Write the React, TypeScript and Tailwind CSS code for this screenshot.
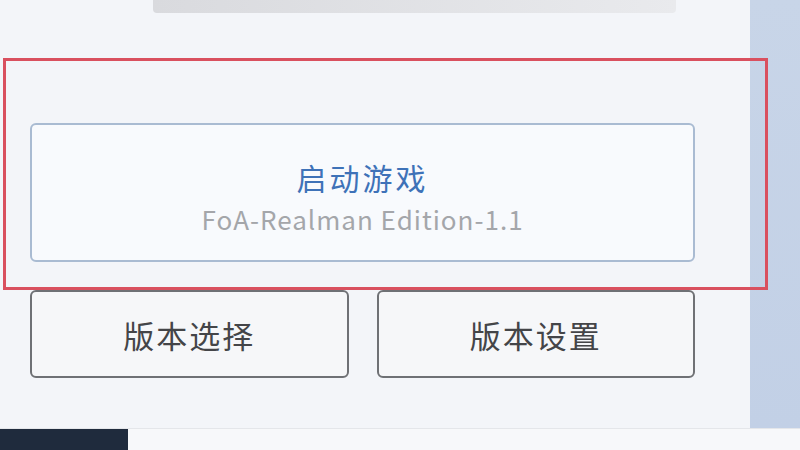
export default function App() {
    const font = { fontFamily: '"Noto Sans CJK SC", "Noto Sans", sans-serif' };

    return (
        <div className="relative w-[800px] h-[450px] overflow-hidden bg-[#f6f7f9]" style={font}>
            <div className="flex h-[428px]">
                <div className="w-[750px] bg-[#f3f5f9] flex flex-col">
                    <div className="ml-[153px] w-[523px] h-[13px] rounded-b-sm bg-gradient-to-r from-[#d9dade] to-[#e9eaed]" />

                    <div className="mt-[110px] ml-[30px] w-[665px] flex flex-col">
                        <button className="h-[139px] rounded-md border-2 border-[#a9bbd2] bg-[#f8fafd] flex flex-col items-center justify-center">
                            <span className="text-[30px] leading-none tracking-[3px] text-[#3e72b8] mt-[8px]">启动游戏</span>
                            <span className="mt-[14px] text-[26px] leading-none tracking-[1px] text-[#a4a6aa]">FoA-Realman Edition-1.1</span>
                        </button>

                        <div className="mt-[28px] flex gap-[28px]">
                            <button className="flex-1 h-[88px] rounded-md border-2 border-[#6f7175] bg-[#f6f7f9] text-[31px] tracking-[2px] text-[#444548] pt-[2px]">
                                版本选择
                            </button>
                            <button className="flex-1 h-[88px] rounded-md border-2 border-[#6f7175] bg-[#f6f7f9] text-[31px] tracking-[2px] text-[#444548] pt-[2px]">
                                版本设置
                            </button>
                        </div>
                    </div>
                </div>
                <div className="flex-1 bg-gradient-to-b from-[#c8d5e8] to-[#c2d0e6]" />
            </div>

            <div className="flex h-[22px] border-t border-[#e4e6ea]">
                <div className="w-[128px] bg-[#1f2b3d]" />
                <div className="flex-1 bg-[#f7f8fa]" />
            </div>

            {/* highlight overlay */}
            <div className="absolute left-[3px] top-[58px] w-[765px] h-[232px] border-[3px] border-[#d9505f] pointer-events-none" />
        </div>
    );
}
